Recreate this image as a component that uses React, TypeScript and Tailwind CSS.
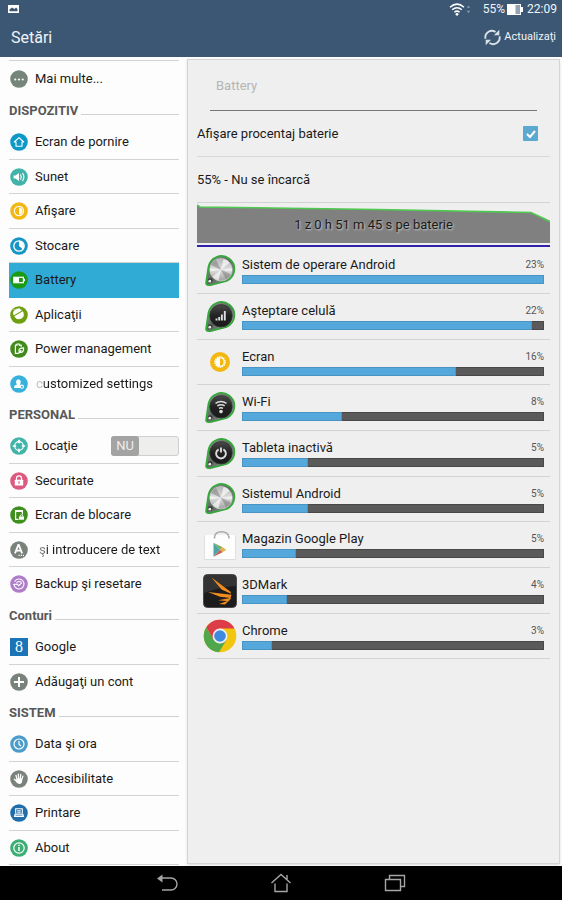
import type { ReactNode } from "react";

type MenuItem = {
    label: string;
    color: string;
    icon: ReactNode;
    active?: boolean;
    toggle?: boolean;
    scrolled?: string;
};

type MenuSection = { title?: string; items: MenuItem[] };

type UsageItem = { label: string; percent: number; icon: ReactNode };

const SECTIONS: MenuSection[] = [
    {
        items: [
            { label: "Mai multe...", color: "#75857a", icon: <g fill="#fff"><circle cx="5.3" cy="9.5" r="1.1" /><circle cx="9" cy="9.5" r="1.1" /><circle cx="12.7" cy="9.5" r="1.1" /></g> },
        ],
    },
    {
        title: "DISPOZITIV",
        items: [
            { label: "Ecran de pornire", color: "#0d98c8", icon: <path d="M4.3 9 9 4.6 13.7 9H12v4.2H6V9Z" fill="none" stroke="#fff" strokeWidth="1.1" strokeLinejoin="round" /> },
            {
                label: "Sunet",
                color: "#42b3a8",
                icon: (
                    <g fill="none" stroke="#fff" strokeWidth="1.1" strokeLinecap="round">
                        <path d="M3.6 7.6h2L9 5v8l-3.4-2.6h-2Z" fill="#fff" stroke="none" />
                        <path d="M10.6 6.8q1.4 2.2 0 4.4M12.7 5.4q2.4 3.6 0 7.2" />
                    </g>
                ),
            },
            {
                label: "Afişare",
                color: "#f3b712",
                icon: (
                    <g>
                        <circle cx="9" cy="9" r="4.6" fill="none" stroke="#fff" strokeWidth="1.2" />
                        <path d="M9 5.5a3.5 3.5 0 0 1 0 7Z" fill="#fff" />
                    </g>
                ),
            },
            {
                label: "Stocare",
                color: "#1795c4",
                icon: (
                    <g>
                        <circle cx="9" cy="9" r="5.2" fill="none" stroke="#fff" strokeWidth="1.3" />
                        <path d="M9 9V4a5 5 0 0 1 3.8 8.2Z" fill="#fff" />
                    </g>
                ),
            },
            {
                label: "Battery",
                color: "#1a9a16",
                active: true,
                icon: (
                    <g>
                        <rect x="3.8" y="6.3" width="9.6" height="5.4" fill="none" stroke="#fff" strokeWidth="1.2" />
                        <path d="M4 6.5h5v5H4ZM14 7.8h1v2.4h-1Z" fill="#fff" />
                    </g>
                ),
            },
            {
                label: "Aplicaţii",
                color: "#6e9f10",
                icon: (
                    <g>
                        <path d="M4.2 10.2 12.8 5.3q2.8 4.300-1.200 7.300-4.800 2.200-7.400-2.400Z" fill="#fff" />
                        <path d="M3.7 8.9a4.600 4.600 0 0 1 7.800-4.500ZM5 4.500 3.700 3M9.300 3.200 9.200 2" fill="#fff" stroke="#fff" strokeWidth=".7" />
                    </g>
                ),
            },
            {
                label: "Power management",
                color: "#408a1e",
                icon: (
                    <g fill="none" stroke="#fff" strokeWidth="1.2" strokeLinejoin="round">
                        <path d="M8.5 13.4H5.400V5.200h1.500V4h2.400v1.200h1.900v1.600" />
                        <path d="M9 10.800q-.2-3 4.600-3 .2 5-3.200 4.600-1.400-.3-1.400-1.600ZM8.500 13.500l2.800-3.400" />
                    </g>
                ),
            },
            {
                label: "customized settings",
                color: "#38b1dc",
                scrolled: "pl-px [mask-image:linear-gradient(to_right,#0004_6px,#000_10px)]",
                icon: (
                    <g>
                        <path d="M4 13c0-2.200 1.400-2.800 3-3.400C5.500 7 6 4.500 8.400 4.500s3 2.500 1.500 5.100l.6.300V13Z" fill="#fff" />
                        <circle cx="11.900" cy="11.700" r="1.600" fill="#38b1dc" stroke="#fff" strokeWidth="1.1" />
                    </g>
                ),
            },
        ],
    },
    {
        title: "PERSONAL",
        items: [
            {
                label: "Locaţie",
                color: "#42b3a8",
                toggle: true,
                icon: (
                    <g fill="none" stroke="#fff" strokeWidth="1.2">
                        <circle cx="9" cy="9" r="4.3" />
                        <path d="M9 2.800v3.400M9 11.800v3.400M2.800 9h3.400M11.800 9h3.400" strokeWidth="1.7" />
                    </g>
                ),
            },
            {
                label: "Securitate",
                color: "#dc5a80",
                icon: (
                    <g>
                        <path d="M6.500 8V6.300a2.500 2.500 0 0 1 5 0V8" fill="none" stroke="#fff" strokeWidth="1.2" />
                        <rect x="4.800" y="7.800" width="8.4" height="5.6" rx=".5" fill="#fff" />
                        <path d="M9 9.300v2.500" stroke="#dc5a80" strokeWidth="1.2" />
                    </g>
                ),
            },
            {
                label: "Ecran de blocare",
                color: "#3f901d",
                icon: (
                    <g>
                        <path d="M8.500 13.400H5.600V4.600h6.800v4M5.800 5.500h6.400" fill="none" stroke="#fff" strokeWidth="1.2" />
                        <path d="M9 10.500h5v3.200H9Z" fill="#fff" />
                        <path d="M10.200 10.600V9.500q1.300-1.400 2.600 0v1.100" fill="none" stroke="#fff" strokeWidth=".9" />
                    </g>
                ),
            },
            {
                label: "şi introducere de text",
                color: "#7a827c",
                scrolled: "pl-1 [mask-image:linear-gradient(to_right,#0008_8px,#000_13px)]",
                icon: (
                    <g fill="none" stroke="#fff" strokeWidth="1.8">
                        <path d="m5 12.300 3.300-8.300h.5l3.300 8.300M6.300 9.600h4.700" />
                        <path d="M8.500 14.400h1.200M10.800 14.400H12M13 14.400h1" strokeWidth="1.1" />
                    </g>
                ),
            },
            {
                label: "Backup şi resetare",
                color: "#ae7cc8",
                icon: (
                    <g fill="none" stroke="#fff" strokeWidth="1.1" strokeLinecap="round">
                        <path d="M4.800 6.200A5 5 0 1 1 4 9.500M3.600 9.300h3.300" />
                        <path d="m7 9.200 1.700 1.500 2.800-2.600M6.800 7.600q2.200-2 4.400-.4" />
                    </g>
                ),
            },
        ],
    },
    {
        title: "Conturi",
        items: [
            { label: "Google", color: "google", icon: null },
            { label: "Adăugaţi un cont", color: "#7a827c", icon: <path d="M9 4v10M4 9h10" stroke="#fff" strokeWidth="2" /> },
        ],
    },
    {
        title: "SISTEM",
        items: [
            {
                label: "Data şi ora",
                color: "#4b9cca",
                icon: (
                    <g fill="none" stroke="#fff" strokeWidth="1.2">
                        <circle cx="9" cy="9" r="5" />
                        <path d="M9 6v3.200l1.800 1.800" />
                    </g>
                ),
            },
            {
                label: "Accesibilitate",
                color: "#7a827c",
                icon: (
                    <g stroke="#fff" strokeLinecap="round" fill="none">
                        <path d="M6.900 9 6 5.400M8.600 8.500l-.3-4.400M10.300 8.500l.4-4M11.800 9.200l1.100-3.100M7 11.800 4.400 9.200" strokeWidth="1.3" />
                        <path d="M6.500 8.500h5.700q.6 5.200-2.400 5.500-2.800 0-3.900-3Z" fill="#fff" stroke="none" />
                    </g>
                ),
            },
            {
                label: "Printare",
                color: "#1f6dab",
                icon: (
                    <g fill="none" stroke="#fff" strokeWidth="1.1">
                        <path d="M5.700 9.300V4.800h6.600v4.500M7.300 6.700h3.400M7.300 8.300h3.400" />
                        <path d="M4.800 9.500h8.400l1 3.500H3.800Z" fill="#fff" stroke="none" />
                        <path d="M5.600 11.200h6.800" stroke="#1f6dab" strokeWidth=".8" />
                    </g>
                ),
            },
            {
                label: "About",
                color: "#3cae74",
                icon: (
                    <g fill="none" stroke="#fff">
                        <circle cx="9" cy="9" r="5.2" strokeWidth="1.2" />
                        <path d="M9 8v4M9 5.700v1.400" strokeWidth="1.5" />
                    </g>
                ),
            },
        ],
    },
];

const USAGE: UsageItem[] = [
    { label: "Sistem de operare Android", percent: 23, icon: <PinIcon id="os" metal /> },
    {
        label: "Aşteptare celulă",
        percent: 22,
        icon: <PinIcon id="cell"><path d="M13.500 20.500v-2M16.200 20.500V17M18.900 20.500v-6M21.800 20.500V11" strokeWidth="1.9" /></PinIcon>,
    },
    { label: "Ecran", percent: 16, icon: <ScreenIcon /> },
    {
        label: "Wi-Fi",
        percent: 8,
        icon: (
            <PinIcon id="wifi">
                <path d="M12.500 12.300q5.500-3.600 11 0M14.300 14.900q3.700-2.400 7.400 0M16 17.300q2-1.200 4 0" strokeWidth="1.4" />
                <circle cx="18" cy="20.600" r="1.800" fill="#ddd" stroke="none" />
            </PinIcon>
        ),
    },
    {
        label: "Tableta inactivă",
        percent: 5,
        icon: <PinIcon id="idle"><path d="M15.600 12.300a4.900 4.900 0 1 0 4.800 0M18 10.500v5" strokeWidth="1.9" /></PinIcon>,
    },
    { label: "Sistemul Android", percent: 5, icon: <PinIcon id="system" metal /> },
    { label: "Magazin Google Play", percent: 5, icon: <PlayIcon /> },
    { label: "3DMark", percent: 4, icon: <MarkIcon /> },
    { label: "Chrome", percent: 3, icon: <ChromeIcon /> },
];

// bar widths are relative to the biggest consumer
const FILL = [100, 96, 71, 33, 22, 22, 18, 15, 10];

function PinIcon({ id, metal, children }: { id: string; metal?: boolean; children?: ReactNode }) {
    return (
        <svg viewBox="0 0 34 34" className="size-[34px]" aria-hidden="true">
            <defs>
                <linearGradient id={`${id}-body`} x1="0" y1="0" x2="1" y2="1">
                    <stop offset="0" stopColor="#9aa39b" />
                    <stop offset=".5" stopColor="#5c655d" />
                    <stop offset="1" stopColor="#a9b1aa" />
                </linearGradient>
                <linearGradient id={`${id}-face`} x1="0" y1="0" x2="0" y2="1">
                    <stop offset="0" stopColor={metal ? "#b4b4b4" : "#4a4a4a"} />
                    <stop offset=".5" stopColor={metal ? "#e0e0e0" : "#222222"} />
                    <stop offset="1" stopColor={metal ? "#a0a0a0" : "#1a1a1a"} />
                </linearGradient>
            </defs>
            <path d="M4.500 31.500Q2 32 3 28.500L4.800 15.500A13.400 13.400 0 1 1 24 27.500L9.500 31.500Q6 33 4.500 31.500Z" fill="#000" opacity=".18" />
            <path d="M3.800 30.300Q2.800 30 3.300 27.500L5.500 13A13 13 0 1 1 23.500 27L8 30.800Q4.800 31.500 3.800 30.300Z" fill={`url(#${id}-body)`} stroke="#35a83b" strokeWidth="1.8" />
            <circle cx="18" cy="15.800" r="11.2" fill={`url(#${id}-face)`} stroke={metal ? "#c4c8c4" : "#333"} strokeWidth=".8" />
            {metal && (
                <g>
                    <path d="M18 15.800 8 11a11 11 0 0 1 5-5ZM18 15.800l10 4.800a11 11 0 0 1-5 5Z" fill="#6f6f6f" opacity=".45" />
                    <path d="m18 15.800 2.500-10.700a11 11 0 0 1 6 3.700ZM18 15.800l-2.500 10.700a11 11 0 0 1-6-3.700Z" fill="#fff" opacity=".65" />
                    <path d="m18 15.800-11-1.800v3.600ZM18 15.800l11 1.800V14Z" fill="#fff" opacity=".5" />
                </g>
            )}
            <circle cx="7.200" cy="26.500" r="2.300" fill="#303630" />
            <circle cx="6.800" cy="27.200" r="1.4" fill="#e8ece8" />
            <g fill="none" stroke="#ddd">{children}</g>
        </svg>
    );
}

function ScreenIcon() {
    return (
        <svg viewBox="0 0 34 34" className="size-[34px]" aria-hidden="true">
            <circle cx="17" cy="17" r="10" fill="#f3b712" />
            <circle cx="17" cy="17" r="5" fill="none" stroke="#fff" strokeWidth="1.5" strokeDasharray="1.5 .7" />
            <circle cx="17" cy="17" r="4.1" fill="none" stroke="#fff" strokeWidth="1" />
            <path d="M17 13a4 4 0 0 0 0 8Z" fill="#fff" />
        </svg>
    );
}

function PlayIcon() {
    return (
        <svg viewBox="0 0 34 34" className="size-[34px]" aria-hidden="true">
            <rect x="1.500" y="7.600" width="31" height="24.4" rx="1" fill="#000" opacity=".12" />
            <rect x="2" y="7" width="30" height="24.3" rx=".8" fill="#fdfdfd" />
            <path d="M11.500 10.500V9.200Q12 3.800 18.500 3.800T26 9.200v1.300" fill="none" stroke="#a8a8a8" strokeWidth="1.5" />
            <path d="M10.500 14.800 17 21.800 10.500 28.800Z" fill="#4aa6a9" />
            <path d="M10.500 14.800 19.500 19.300 17 21.800Z" fill="#7fae56" />
            <path d="M19.500 19.300 23.300 21.800 19.500 24.300 17 21.800Z" fill="#e2b24b" />
            <path d="M10.500 28.800 19.500 24.300 17 21.800Z" fill="#c75b58" />
        </svg>
    );
}

function MarkIcon() {
    return (
        <svg viewBox="0 0 34 34" className="size-[34px]" aria-hidden="true">
            <rect x=".5" y=".5" width="33" height="33" rx="4" fill="#1c1c1c" stroke="#4a4a4a" />
            <path d="M1 5q0-4 4-4h24q4 0 4 4v7Q17 13 1 19Z" fill="#333" />
            <path d="M8.500 3.500 27.500 17.800 28 19.800 18.500 15.500Z" fill="#f08c1e" />
            <path d="M5 18 28.500 20.800 27.500 24 17 22.800Z" fill="#f08c1e" />
            <path d="M15 26.300 28.500 23.800 25.500 27.200ZM16 30 26.500 26.300 22 30.500Z" fill="#f08c1e" />
        </svg>
    );
}

function ChromeIcon() {
    return (
        <svg viewBox="0 0 34 34" className="size-[34px]" aria-hidden="true">
            <circle cx="17" cy="17" r="16.3" fill="#f2c50f" />
            <path d="M17 9.500h14.500A16.300 16.300 0 0 0 3.300 8.200L10.500 20.800Z" fill="#dd3c49" />
            <path d="M3.300 8.200A16.300 16.300 0 0 0 16 33.300L23.500 20.800 17 24.500 10.500 20.800Z" fill="#4fa64b" />
            <circle cx="17" cy="17" r="7.4" fill="#f1f1f1" />
            <circle cx="17" cy="17" r="5.8" fill="#3f8ade" />
        </svg>
    );
}

function MenuIcon({ item }: { item: MenuItem }) {
    if (item.color === "google") {
        return <span className="flex size-[18px] items-center justify-center bg-[#1b74b8] font-['Liberation_Serif',serif] text-base leading-none text-white" aria-hidden="true">8</span>;
    }
    return (
        <svg viewBox="0 0 18 18" className="size-[18px] shrink-0" aria-hidden="true">
            <circle cx="9" cy="9" r="8.8" fill={item.color} />
            {item.icon}
        </svg>
    );
}

function Toggle({ label }: { label: string }) {
    return (
        <label className="relative flex h-5 w-[68px] rounded-[3px] border border-[#cfcfcf] bg-[#eeeeec]">
            <input type="checkbox" className="sr-only" aria-label={label} />
            <span className="-my-px -ml-px flex w-7 items-center justify-center rounded-[3px] bg-[#a3a3a3] text-[13px] text-[#eeeeee]">NU</span>
        </label>
    );
}

function Section({ section }: { section: MenuSection }) {
    return (
        <section>
            {section.title && (
                <h2 className="flex h-7 items-center gap-[3px] text-[13px] font-bold text-[#585858]">
                    {section.title}
                    <span className="mt-[7px] flex-1 border-t border-[#cdd2d2]" />
                </h2>
            )}
            <ul>
                {section.items.map((item, i) => {
                    const last = i === section.items.length - 1 && section.title !== "SISTEM";
                    const line = last ? "border-transparent" : "border-[#d3d3d3]";
                    return (
                        <li
                            key={item.label}
                            className={`flex h-[34px] items-center border-b pl-px odd:h-[35px] ${item.active ? "border-[#30abd6] bg-[#30abd6]" : line}`}
                        >
                            <a href="#" className="flex flex-1 items-center gap-[7px] whitespace-nowrap">
                                <MenuIcon item={item} />
                                <span className={item.scrolled}>{item.label}</span>
                            </a>
                            {item.toggle && <Toggle label={item.label} />}
                        </li>
                    );
                })}
            </ul>
        </section>
    );
}

function StatusBar() {
    return (
        <div className="flex h-[18px] items-center px-[5px] text-xs">
            <svg viewBox="0 0 11 8" className="ml-[3px] h-2 w-[11px]" aria-hidden="true">
                <path d="M0 0h11v8H0ZM1.500 6.300h8V4L8 2.600 6.500 4 4 2.400 1.500 4.600Z" fill="#fff" fillRule="evenodd" />
            </svg>
            <svg viewBox="0 0 22 14" className="ml-auto h-3.5 w-[22px]" aria-hidden="true">
                <g fill="none" stroke="#fff" strokeWidth="1.5">
                    <path d="M1 5.200q7-6.200 14 0M3.200 7.800q4.800-4.200 9.600 0M5.400 10.200q2.600-2.200 5.200 0" />
                </g>
                <circle cx="8" cy="12.300" r="1.4" fill="#fff" />
                <path d="m17.800 5.800 1.700-2.400 1.700 2.400ZM17.800 8.800l1.700 2.400 1.700-2.400Z" fill="#8b9aab" />
            </svg>
            <span className="ml-3">55%</span>
            <svg viewBox="0 0 16 11" className="mr-1 ml-0.5 h-[11px] w-4" aria-hidden="true">
                <path d="M0 0h14v3h2v5h-2v3H0Z" fill="#fff" />
                <path d="M8.500 1h4.500v9H8.500Z" fill="#94a2b3" />
            </svg>
            <span>22:09</span>
        </div>
    );
}

function BatteryGraph() {
    return (
        <div className="relative">
            <svg viewBox="0 0 353 40" preserveAspectRatio="none" className="block h-10 w-full" aria-hidden="true">
                <path d="M0 2 3 4 180 6.500 334 9.500 353 18.500V40H0Z" fill="#808080" />
                <path d="M0 2 3 4 180 6.500 334 9.500 353 18.500" fill="none" stroke="#4fc94f" strokeWidth="1.6" />
            </svg>
            <div className="mt-0.5 h-0.5 bg-[#3022a8]" />
            <p className="absolute inset-x-0 top-3 text-center leading-5 [text-shadow:1px_1px_2px_#ccc]">1 z 0 h 51 m 45 s pe baterie</p>
        </div>
    );
}

function UsageRow({ item, fill }: { item: UsageItem; fill: number }) {
    return (
        <li className="flex h-[46px] items-center gap-[5px] border-b border-[#d3d3d3] px-[6px] nth-[3n]:h-[45px]">
            {item.icon}
            <div className="flex-1 pb-0.5">
                <div className="flex items-center justify-between leading-5">
                    <span>{item.label}</span>
                    <span className="text-[10px] text-[#555]">{item.percent}%</span>
                </div>
                <div className="h-[9px] bg-[#5a5a5a] inset-ring inset-ring-[#484848]">
                    <div className="h-full bg-[#54a8db] inset-ring inset-ring-[#4a94c4]" style={{ width: `${fill}%` }} />
                </div>
            </div>
        </li>
    );
}

function NavButton({ label, children }: { label: string; children: ReactNode }) {
    return (
        <button type="button" aria-label={label} className="flex w-[114px] items-center justify-center">
            <svg viewBox="0 0 22 20" className="h-5 w-[22px]" fill="none" stroke="#a5a5a5" strokeWidth="1.4" aria-hidden="true">
                {children}
            </svg>
        </button>
    );
}

export default function App() {
    return (
        <div className="flex min-h-screen flex-col bg-[#fdfdfd] font-[Roboto,sans-serif] text-[13px] text-[#1a1a1a]">
            <header className="bg-[#3c5773] text-[#f0f4f8]">
                <StatusBar />
                <div className="flex h-[39px] items-center justify-between pr-[6px] pl-[11px]">
                    <h1 className="text-base">Setări</h1>
                    <button type="button" className="flex items-center gap-[3px] text-[11px]">
                        <svg viewBox="0 0 17 17" className="size-[17px]" fill="none" stroke="#d8e0e8" strokeWidth="1.8" aria-hidden="true">
                            <path d="M1.500 9.800A6.500 6.500 0 0 1 11.500 3M15.500 7.200A6.500 6.500 0 0 1 5.500 14" />
                            <path d="M15.300.8v5.400H9.900ZM1.700 16.200v-5.400h5.400Z" fill="#d8e0e8" stroke="none" />
                        </svg>
                        Actualizaţi
                    </button>
                </div>
            </header>

            <main className="flex flex-1">
                <nav className="w-[179px] shrink-0 pt-[3px] pl-[9px]">
                    <div className="border-t border-[#d3d3d3] pt-px">
                        {SECTIONS.map((section) => (
                            <Section key={section.title ?? "more"} section={section} />
                        ))}
                    </div>
                </nav>

                <div className="mt-0.5 mr-0.5 mb-0.5 ml-2 flex-1 border border-[#d4d4d4] bg-[#efefef] px-[9px] shadow-sm">
                    <div className="mx-[13px] h-[51px] border-b border-[#777]">
                        <input
                            type="text"
                            aria-label="Battery"
                            placeholder="Battery"
                            className="h-[51px] w-full bg-transparent px-[6px] outline-none placeholder:text-[#b5b5b5]"
                        />
                    </div>
                    <label className="relative flex h-[46px] items-center justify-between border-b border-[#d8d8d8] pr-3">
                        Afişare procentaj baterie
                        <input type="checkbox" defaultChecked className="peer sr-only" />
                        <span className="flex size-[15px] items-center justify-center rounded-[1px] bg-[#cfcfcf] peer-checked:bg-[#5ba9d0]">
                            <svg viewBox="0 0 10 10" className="size-2.5" aria-hidden="true">
                                <path d="m1 5 3 3 5-6" fill="none" stroke="#fff" strokeWidth="2" />
                            </svg>
                        </span>
                    </label>
                    <p className="flex h-[46px] items-center border-b border-[#d3d3d3]">55% - Nu se încarcă</p>
                    <BatteryGraph />
                    <ul className="mt-px">
                        {USAGE.map((item, i) => (
                            <UsageRow key={item.label} item={item} fill={FILL[i]} />
                        ))}
                    </ul>
                </div>
            </main>

            <footer className="flex h-[34px] justify-center bg-black">
                <NavButton label="Înapoi">
                    <path d="M6 5h9a5.500 5.500 0 0 1 0 12H6" />
                    <path d="M1 5.500 6.500 1.500v8Z" fill="#a5a5a5" stroke="none" />
                </NavButton>
                <NavButton label="Ecran principal">
                    <path d="M1.500 10 11 1.500 20.500 10M5 10.500v8h12v-8M17 6.500V2" />
                </NavButton>
                <NavButton label="Recente">
                    <path d="M1.500 6.500h15v11h-15ZM5.500 6V2.500h15v11H17" />
                </NavButton>
            </footer>
        </div>
    );
}
